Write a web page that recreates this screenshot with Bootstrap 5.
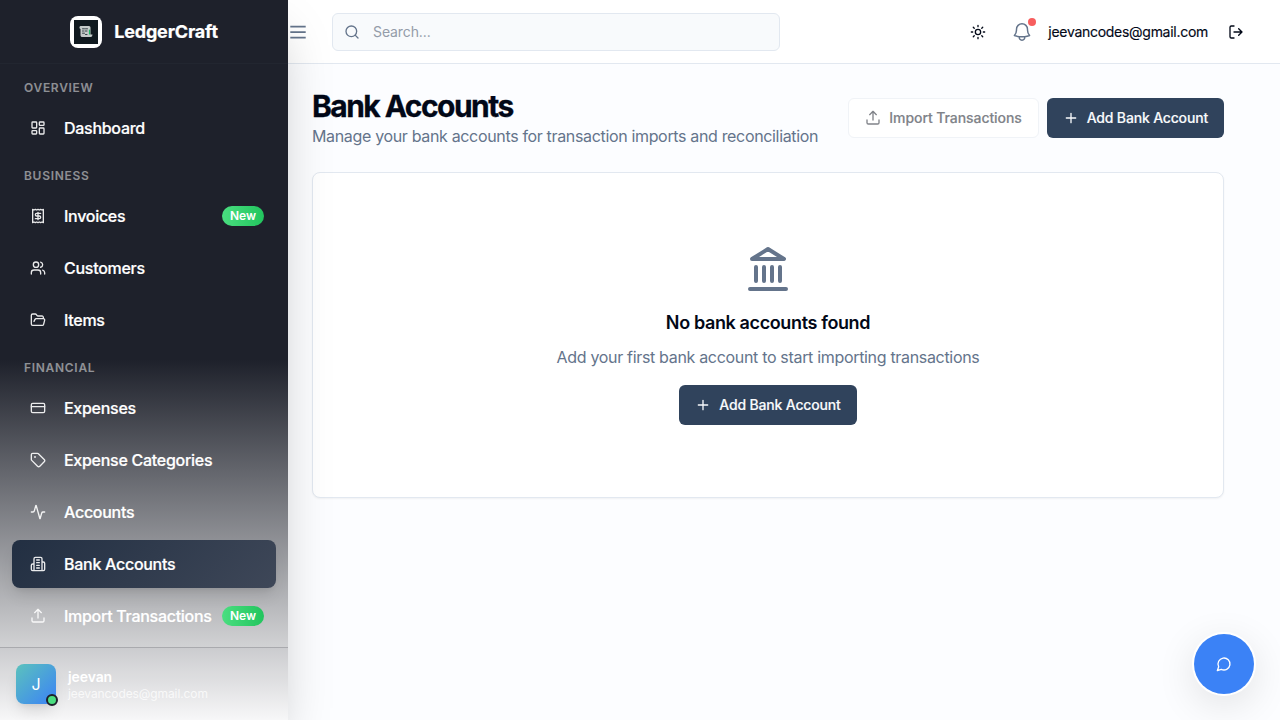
<!DOCTYPE html>
<html lang="en">
<head>
<meta charset="utf-8">
<meta name="viewport" content="width=device-width, initial-scale=1">
<title>Bank Accounts - LedgerCraft</title>
<link href="https://cdn.jsdelivr.net/npm/bootstrap@5.3.0/dist/css/bootstrap.min.css" rel="stylesheet">
<style>
body{font-family:Inter,"Liberation Sans",sans-serif;font-size:16px;line-height:24px;background:#fcfdff;color:#020817;height:100vh;overflow:hidden}
svg{fill:none;stroke:currentColor;stroke-width:2;stroke-linecap:round;stroke-linejoin:round;display:block;flex-shrink:0}
.sidebar{width:288px;z-index:5;color:#fff;background:linear-gradient(180deg,#1e212b 50%,#fff 100%);box-shadow:0 25px 50px -12px rgba(0,0,0,.25)}
.brand{height:64px;border-bottom:1px solid #222630;gap:12px}
.brand-logo{width:32px;height:32px;border-radius:8px;background:#fff}
.brand-name{font-size:18px;font-weight:700;line-height:28px;letter-spacing:-.18px;-webkit-text-stroke:.2px}
.side-nav{padding:16px 12px;overflow:hidden;min-height:0}
.side-label{font-size:12px;line-height:16px;font-weight:600;letter-spacing:.7px;color:rgba(255,255,255,.5);padding:0 12px;margin-bottom:4px}
.side-group{margin-bottom:16px;display:flex;flex-direction:column;gap:4px}
.side-link{height:48px;border-radius:8px;padding:0 12px 0 18px;color:#fff;font-weight:500;letter-spacing:-.28px;text-decoration:none;white-space:nowrap;-webkit-text-stroke:.2px}
.side-link svg{margin-right:18px;opacity:.9}
.side-link.active{background:linear-gradient(135deg,#222f42,#3e4758);box-shadow:0 10px 15px -3px rgba(0,0,0,.1),0 4px 6px -4px rgba(0,0,0,.1)}
.new-pill{font-size:12px;line-height:16px;font-weight:600;letter-spacing:0;padding:2px 8px;border-radius:10px;background:linear-gradient(90deg,#4ade80,#22c55e);-webkit-text-stroke:0}
.side-user{height:73px;border-top:1px solid #a9aaae;padding:0 16px;gap:12px;background:rgba(30,33,43,.035)}
.avatar{width:40px;height:40px;border-radius:8px;background:linear-gradient(135deg,#5bc2bd,#3b82f6);box-shadow:0 10px 15px -3px rgba(0,0,0,.1),0 4px 6px -4px rgba(0,0,0,.1)}
.presence{right:-2px;bottom:-2px;width:12px;height:12px;border-radius:50%;background:#4ade80;border:2px solid #1e212b}
.user-name{font-size:14px;line-height:19px;font-weight:600;letter-spacing:-.1px}
.user-mail{font-size:12px;line-height:16px;letter-spacing:-.1px;color:rgba(255,255,255,.75)}
.topbar{height:64px;background:#fff;border-bottom:1px solid #e2e8f0;padding-right:36px}
.muted{color:#64748b}
.search-box{width:448px;height:38px;margin-left:24px;border:1px solid #e2e8f0;border-radius:6px;background:#f8fafc;padding:0 11px;gap:13px;font-size:14px;letter-spacing:-.1px;color:#64748b}
.search-box span{color:#949ca9}
.bell{margin-left:25px;margin-right:15px}
.alert-dot{width:8px;height:8px;border-radius:50%;background:#f75e5e;right:-3px;top:-3px}
.account{font-size:14px;line-height:20px;letter-spacing:-.28px;margin-right:20px;-webkit-text-stroke:.15px}
.page{padding:24px 56px 0 24px}
.page-title{font-size:30px;line-height:36px;font-weight:700;letter-spacing:-1.55px;margin:0;-webkit-text-stroke:.3px}
.page-sub{letter-spacing:-.34px}
.btn-act{height:40px;border-radius:6px;font-size:14px;line-height:20px;font-weight:500;letter-spacing:-.17px;padding:0 16px;display:inline-flex;align-items:center;gap:8px;border:0;white-space:nowrap;-webkit-text-stroke:.15px}
.btn-dark-blue,.btn-dark-blue:hover{background:#30435c;color:#f8fafc}
.btn-ghost,.btn-ghost:hover{background:#fff;border:1px solid #f0f3f7;color:#808389;letter-spacing:-.08px}
.empty-panel{height:326px;margin-top:24px;border:1px solid #e2e8f0;border-radius:8px;background:#fff;box-shadow:0 1px 2px rgba(0,0,0,.05)}
.empty-title{font-size:18px;line-height:28px;font-weight:600;letter-spacing:-.37px;margin:0}
.empty-text{letter-spacing:-.32px}
.chat-btn{right:26px;bottom:26px;width:60px;height:60px;border-radius:50%;background:#3b82f6;border:0;color:#fff;box-shadow:0 0 0 2px #fff,0 10px 40px rgba(0,0,0,.12)}
</style>
</head>
<body class="d-flex">
<svg width="0" height="0" class="position-absolute"><defs>
<symbol id="upload" viewBox="0 0 24 24"><path d="M21 15v4a2 2 0 0 1-2 2H5a2 2 0 0 1-2-2v-4M17 7l-5-5-5 5M12 2v13"/></symbol>
<symbol id="plus" viewBox="0 0 24 24"><path d="M5 12h14M12 5v14"/></symbol>
</defs></svg>
<aside class="sidebar d-flex flex-column flex-shrink-0 position-relative">
  <div class="brand d-flex align-items-center justify-content-center flex-shrink-0">
    <div class="brand-logo d-flex align-items-center justify-content-center">
      <svg width="24" height="24" viewBox="0 0 24 24" style="stroke:none"><path fill="#10191f" d="M0 0h24v24H0z"/><path fill="#c5cbca" d="M7 6h8q1.500 0 1.500 1.500V14.500H18.500q0 2.500-2 2.500H8.500q-2 0-2-1.500V9Q5 8.500 5.500 7T7 6z"/><path stroke="#26343a" stroke-width=".9" d="M8.500 8.800h2m1 0h2M8.500 11h1m1.500 0h2M8.500 13.200h2m1 1.300h1.500"/><path stroke="#20b866" stroke-width="1.200" d="M15.500 10v4"/></svg>
    </div>
    <div class="brand-name">LedgerCraft</div>
  </div>
  <nav class="side-nav flex-grow-1">
    <div class="side-group"><div class="side-label">OVERVIEW</div>
      <a class="side-link d-flex align-items-center" href="#"><svg width="16" height="16" viewBox="0 0 24 24"><rect x="3" y="3" width="7" height="9" rx="1"/><rect x="14" y="3" width="7" height="5" rx="1"/><rect x="14" y="12" width="7" height="9" rx="1"/><rect x="3" y="16" width="7" height="5" rx="1"/></svg>Dashboard</a>
    </div>
    <div class="side-group"><div class="side-label">BUSINESS</div>
      <a class="side-link d-flex align-items-center" href="#"><svg width="16" height="16" viewBox="0 0 24 24"><path d="M4 2v20l2-1 2 1 2-1 2 1 2-1 2 1 2-1 2 1V2l-2 1-2-1-2 1-2-1-2 1-2-1-2 1ZM16 8h-6a2 2 0 1 0 0 4h4a2 2 0 1 1 0 4H8M12 17.500v-11"/></svg>Invoices<span class="new-pill ms-auto">New</span></a>
      <a class="side-link d-flex align-items-center" href="#"><svg width="16" height="16" viewBox="0 0 24 24"><path d="M16 21v-2a4 4 0 0 0-4-4H6a4 4 0 0 0-4 4v2M22 21v-2a4 4 0 0 0-3-3.870M16 3.130a4 4 0 0 1 0 7.750"/><circle cx="9" cy="7" r="4"/></svg>Customers</a>
      <a class="side-link d-flex align-items-center" href="#"><svg width="16" height="16" viewBox="0 0 24 24"><path d="m6 14 1.500-2.900A2 2 0 0 1 9.240 10H20a2 2 0 0 1 1.940 2.500l-1.540 6a2 2 0 0 1-1.950 1.500H4a2 2 0 0 1-2-2V5a2 2 0 0 1 2-2h3.900a2 2 0 0 1 1.690.9l.81 1.200a2 2 0 0 0 1.670.9H18a2 2 0 0 1 2 2v2"/></svg>Items</a>
    </div>
    <div class="side-group"><div class="side-label">FINANCIAL</div>
      <a class="side-link d-flex align-items-center" href="#"><svg width="16" height="16" viewBox="0 0 24 24"><rect x="2" y="5" width="20" height="14" rx="2"/><path d="M2 10h20"/></svg>Expenses</a>
      <a class="side-link d-flex align-items-center" href="#"><svg width="16" height="16" viewBox="0 0 24 24"><path d="M12.586 2.586A2 2 0 0 0 11.172 2H4a2 2 0 0 0-2 2v7.172a2 2 0 0 0 .586 1.414l8.704 8.704a2.426 2.426 0 0 0 3.420 0l6.580-6.580a2.426 2.426 0 0 0 0-3.420z"/><circle cx="7.500" cy="7.500" r=".5" fill="currentColor"/></svg>Expense Categories</a>
      <a class="side-link d-flex align-items-center" href="#"><svg width="16" height="16" viewBox="0 0 24 24"><path d="M22 12h-2.480a2 2 0 0 0-1.930 1.460l-2.350 8.360a.25.25 0 0 1-.48 0L9.240 2.180a.25.25 0 0 0-.48 0l-2.350 8.360A2 2 0 0 1 4.490 12H2"/></svg>Accounts</a>
      <a class="side-link active d-flex align-items-center" href="#"><svg width="16" height="16" viewBox="0 0 24 24"><path d="M6 22V4a2 2 0 0 1 2-2h8a2 2 0 0 1 2 2v18ZM6 12H4a2 2 0 0 0-2 2v6a2 2 0 0 0 2 2h2M18 9h2a2 2 0 0 1 2 2v9a2 2 0 0 1-2 2h-2M10 6h4M10 10h4M10 14h4M10 18h4"/></svg>Bank Accounts</a>
      <a class="side-link d-flex align-items-center" href="#"><svg width="16" height="16"><use href="#upload"/></svg>Import Transactions<span class="new-pill ms-auto">New</span></a>
    </div>
  </nav>
  <div class="side-user d-flex align-items-center flex-shrink-0">
    <div class="avatar position-relative d-flex align-items-center justify-content-center">J<span class="presence position-absolute"></span></div>
    <div><div class="user-name">jeevan</div><div class="user-mail">jeevancodes@gmail.com</div></div>
  </div>
</aside>
<div class="flex-grow-1 d-flex flex-column">
  <header class="topbar d-flex align-items-center">
    <svg class="muted" width="20" height="20" viewBox="0 0 20 20" style="stroke-width:1.700;stroke-linecap:butt"><path d="M2.300 4.600h15.400M2.300 10.200h15.400M2.300 15.600h15.400"/></svg>
    <div class="search-box d-flex align-items-center"><svg width="16" height="16" viewBox="0 0 24 24"><circle cx="11" cy="11" r="8"/><path d="m21 21-4.300-4.300"/></svg><span>Search...</span></div>
    <div class="d-flex align-items-center ms-auto">
      <svg width="16" height="16" viewBox="0 0 24 24"><circle cx="12" cy="12" r="4"/><path d="M12 2v2M12 20v2m-7.070-17.070 1.410 1.410m11.320 11.320 1.410 1.410M2 12h2M20 12h2M6.340 17.660l-1.410 1.410M19.070 4.930l-1.410 1.410"/></svg>
      <div class="position-relative muted bell"><svg width="22" height="22" viewBox="0 0 24 24" style="stroke-width:1.600"><path d="M14.860 17.080a23.850 23.850 0 0 0 5.450-1.310A8.970 8.970 0 0 1 18 9.750V9A6 6 0 0 0 6 9v.75a8.970 8.970 0 0 1-2.310 6.020c1.730.64 3.560 1.090 5.450 1.310m5.720 0a24.250 24.250 0 0 1-5.720 0m5.720 0a3 3 0 1 1-5.720 0"/></svg><span class="alert-dot position-absolute"></span></div>
      <span class="account">jeevancodes@gmail.com</span>
      <svg width="16" height="16" viewBox="0 0 24 24"><path d="M9 21H5a2 2 0 0 1-2-2V5a2 2 0 0 1 2-2h4M16 17l5-5-5-5M21 12H9"/></svg>
    </div>
  </header>
  <main class="page">
    <div class="d-flex align-items-center justify-content-between">
      <div><h1 class="page-title">Bank Accounts</h1><div class="muted page-sub">Manage your bank accounts for transaction imports and reconciliation</div></div>
      <div class="d-flex gap-2"><button class="btn btn-act btn-ghost"><svg width="16" height="16"><use href="#upload"/></svg>Import Transactions</button><button class="btn btn-act btn-dark-blue"><svg width="16" height="16"><use href="#plus"/></svg>Add Bank Account</button></div>
    </div>
    <section class="empty-panel d-flex flex-column align-items-center justify-content-center">
      <svg class="muted mb-3" width="48" height="48" viewBox="0 0 24 24"><path d="M3 22h18M6 18v-7M10 18v-7M14 18v-7M18 18v-7M12 2l8 5H4z"/></svg>
      <h2 class="empty-title mb-2">No bank accounts found</h2>
      <div class="muted empty-text mb-3">Add your first bank account to start importing transactions</div>
      <button class="btn btn-act btn-dark-blue"><svg width="16" height="16"><use href="#plus"/></svg>Add Bank Account</button>
    </section>
  </main>
</div>
<button class="chat-btn position-fixed d-flex align-items-center justify-content-center"><svg width="16" height="16" viewBox="0 0 24 24"><path d="M7.900 20A9 9 0 1 0 4 16.100L2 22Z"/></svg></button>
<script src="https://cdn.jsdelivr.net/npm/bootstrap@5.3.0/dist/js/bootstrap.bundle.min.js"></script>
</body>
</html>
